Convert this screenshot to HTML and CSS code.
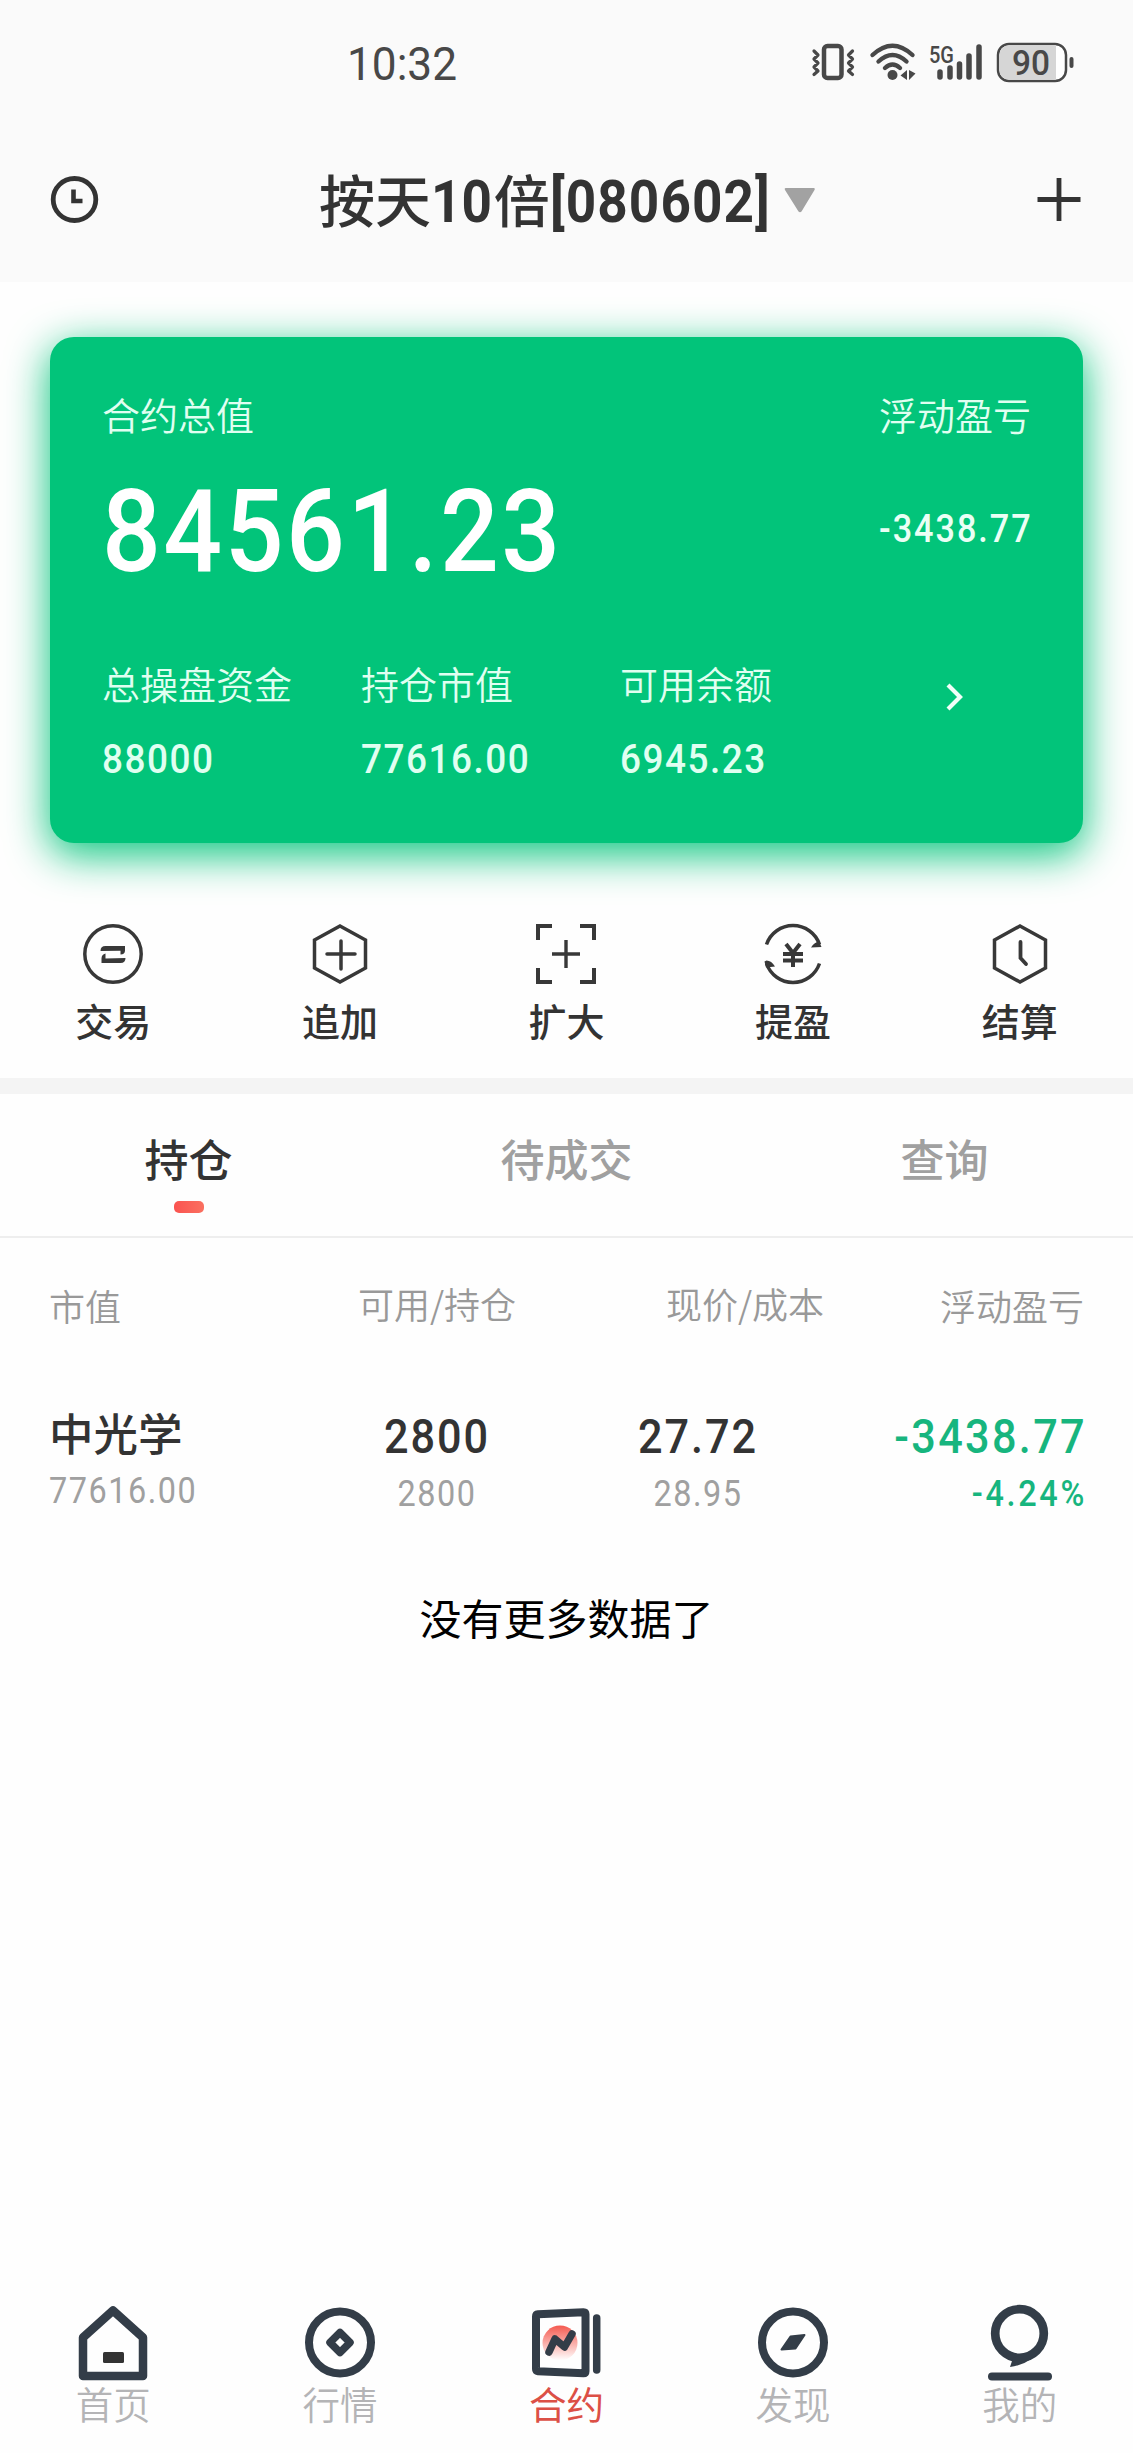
FILE: index.html
```html
<!DOCTYPE html>
<html lang="zh-CN">
<head>
<meta charset="utf-8">
<title>合约</title>
<link rel="stylesheet" href="styles.css">
</head>
<body>
<header class="top">
  <div class="status">
    <span class="time">10:32</span>
    <svg class="status-icons" width="280" height="60" viewBox="0 0 280 60" fill="none" stroke="#484848" stroke-linecap="round" stroke-linejoin="round">
      <rect x="14" y="16" width="17.500" height="32" rx="3.500" stroke-width="4.500"/>
      <path d="M4 21l4 4-4 4 4 4-4 4 4 4-4 3.500M42.500 21l-4 4 4 4-4 4 4 4-4 4 4 3.500" stroke-width="3.200"/>
      <path d="M62.500 25q20-18.500 40 0M68.500 31.500q14-13 28 0M75 38q7.500-7 15 0" stroke-width="4.400"/>
      <circle cx="82.500" cy="45" r="5" fill="#484848" stroke="none"/>
      <path d="M97 40v10l-6.500-4.500zM99 40v10l6.500-6.500z" fill="#484848" stroke="none"/>
      <path d="M130 42v5M140 38v9M149.500 34v13M159 26v21M169 17v30" stroke-width="5.500"/>
      <rect x="188" y="14" width="68" height="37" rx="11" stroke-width="2.500" fill="#fff"/>
      <path d="M199 15.300h47v34.400h-47a9.700 9.700 0 0 1-9.700-9.700v-15a9.700 9.700 0 0 1 9.700-9.700z" fill="#d6d6d6" stroke="none"/>
      <path d="M261.500 29v7" stroke-width="4"/>
      <text class="net" x="119" y="32.500" textLength="25" lengthAdjust="spacingAndGlyphs">5G</text>
      <text class="batt" x="202" y="44.500" textLength="38" lengthAdjust="spacingAndGlyphs">90</text>
    </svg>
  </div>
  <div class="titlebar">
    <svg width="50" height="50" viewBox="0 0 50 50" fill="none" stroke="#333"><ellipse cx="25.500" cy="24.500" rx="21.300" ry="21" stroke-width="4.800"/><path d="M24.500 14.500v11.500h9" stroke-width="4.600"/></svg>
    <h1 class="title"><span class="title-text">按天<b class="ten">10</b>倍<b class="code">[080602]</b></span><svg width="32" height="26" viewBox="0 0 32 26"><path d="M1.500 1h28.500q1.500.500.500 2l-13 21.500q-1.500 1.500-3 0l-13.500-21.500q-1-1.500.500-2z" fill="#a2a2a2"/></svg></h1>
    <svg width="46" height="46" viewBox="0 0 46 46" stroke="#333" stroke-width="4.800"><path d="M1.500 22.500h43M23 1v43"/></svg>
  </div>
</header>

<section class="card">
  <div class="card-head">
    <div><div class="label">合约总值</div><div class="total">84561.23</div></div>
    <div class="float"><div class="label">浮动盈亏</div><div class="pl">-3438.77</div></div>
  </div>
  <div class="card-foot">
    <div><div class="label">总操盘资金</div><div class="amount">88000</div></div>
    <div><div class="label">持仓市值</div><div class="amount">77616.00</div></div>
    <div><div class="label">可用余额</div><div class="amount">6945.23</div></div>
    <svg class="chevron" width="20" height="30" viewBox="0 0 20 30" fill="none" stroke="#f2fff9" stroke-width="4.200"><path d="M2 3l12 12-12 12"/></svg>
  </div>
</section>

<nav class="actions">
  <a><svg width="60" height="60" viewBox="0 0 60 60" fill="none" stroke="#383838" stroke-width="3.500"><circle cx="30" cy="30" r="28.200"/><path d="M17.500 27q0-5 5-5h19.500v4.500q0 4-4.500 4v-3.700zM42.500 34q0 5-5 5h-19v-4.500q0-4 4-5v5z" fill="#383838" stroke="none"/></svg><span>交易</span></a>
  <a><svg width="60" height="60" viewBox="0 0 60 60" fill="none" stroke="#383838" stroke-width="3.500"><path d="M30 2l25.500 14v28l-25.500 14-25.500-14v-28z"/><path d="M17 30h28M31 17v28" stroke-linecap="round"/></svg><span>追加</span></a>
  <a><svg width="60" height="60" viewBox="0 0 60 60" fill="none" stroke="#383838" stroke-width="4"><path d="M16 2h-14v14M44 2h14v14M16 58h-14v-14M44 58h14v-14"/><path d="M16 30h28M30 16v28" stroke-width="3.400"/></svg><span>扩大</span></a>
  <a><svg width="60" height="60" viewBox="0 0 60 60" fill="none" stroke="#383838" stroke-width="3.500"><path d="M3.500 20.500a28 28 0 0 1 53 0M3.500 39.500a28 28 0 0 0 53 0"/><path d="M58.500 23l-10.500.500q3-5 8-6zM1.500 37.500l2-1q5 0 8.500 6l-9 1z" fill="#383838" stroke="none"/><path d="M23 20l7 9 7-9M20 30h20M20 36.500h20M30 29v14" stroke-width="4"/></svg><span>提盈</span></a>
  <a><svg width="60" height="60" viewBox="0 0 60 60" fill="none" stroke="#383838" stroke-width="3.500"><path d="M30 2l25.500 14v28l-25.500 14-25.500-14v-28z"/><path d="M30.500 18v16l5.500 6" stroke-linecap="round" stroke-width="3.800"/></svg><span>结算</span></a>
</nav>

<main class="holdings">
  <div class="tabs"><span class="tab active">持仓</span><span class="tab">待成交</span><span class="tab">查询</span></div>
  <div class="grid columns"><span>市值</span><span class="mid">可用/持仓</span><span class="mid">现价/成本</span><span>浮动盈亏</span></div>
  <div class="grid stock">
    <div class="first"><div class="name">中光学</div><div class="sub">77616.00</div></div>
    <div><div class="num">2800</div><div class="sub">2800</div></div>
    <div><div class="num">27.72</div><div class="sub">28.95</div></div>
    <div class="down"><div class="num">-3438.77</div><div class="sub">-4.24%</div></div>
  </div>
  <p class="end">没有更多数据了</p>
</main>

<nav class="bottom">
  <a><svg width="76" height="80" viewBox="0 0 76 80" fill="none" stroke="#333d48" stroke-width="8.500" stroke-linejoin="round"><path d="M38 8.500l30 27v38.500h-60v-38.500z"/><rect x="28" y="50" width="21" height="11" rx="1.500" fill="#333" stroke="none"/></svg><span>首页</span></a>
  <a><svg width="76" height="80" viewBox="0 0 76 80" fill="none" stroke="#333d48" stroke-width="8"><circle cx="38" cy="40.500" r="31"/><path d="M38 30.500l10 10-10 10-10-10z" stroke-width="7.500" stroke-linejoin="round"/></svg><span>行情</span></a>
  <a class="on"><svg width="76" height="80" viewBox="0 0 76 80" fill="none" stroke="#333d48" stroke-width="8" stroke-linejoin="round" stroke-linecap="round"><defs><linearGradient id="sun" x1="0" y1="0" x2="0" y2="1"><stop offset="0" stop-color="#f45a50"/><stop offset="1" stop-color="#fff"/></linearGradient></defs><circle cx="32" cy="41" r="17.500" fill="url(#sun)" stroke="none"/><path d="M8 14.500q0-2 2-2.200l45.500-2q2 0 2 2v57q0 2-2 2l-45.500-2q-2-.200-2-2.200z"/><path d="M21 50l6-13 9.500 8 7.500-13" stroke-width="7.500"/><path d="M68.700 16v52" stroke-width="7.500"/></svg><span>合约</span></a>
  <a><svg width="76" height="80" viewBox="0 0 76 80" fill="none" stroke="#333d48" stroke-width="8"><circle cx="38" cy="40.500" r="31"/><path d="M26.500 47.500l9-13 14-1.500-9 13.500z" fill="#333d48" stroke-width="2" stroke-linejoin="round"/></svg><span>发现</span></a>
  <a><svg width="76" height="80" viewBox="0 0 76 80" fill="none" stroke="#333d48" stroke-width="8.700"><circle cx="37.500" cy="31.500" r="24.300"/><path d="M31 56l-3 9q22-3 31-19z" fill="#333d48" stroke="none"/><path d="M10 74.500h56" stroke-width="8" stroke-linecap="round"/></svg><span>我的</span></a>
</nav>
</body>
</html>
```
FILE: styles.css
```css
* { box-sizing: border-box; }
body { margin: 0; width: 1133px; height: 2453px; display: flex; flex-direction: column; background: #fefefe; color: #333; font-family: "Noto Sans CJK SC", sans-serif; font-size: 38px; }
svg { display: block; flex: none; overflow: visible; }
.top { height: 282px; background: #fafafa; }
.status { height: 122px; display: flex; justify-content: space-between; padding: 30px 43px 0 347px; }
.time { font: 400 47px/68px Roboto, sans-serif; color: #484848; transform: scaleX(.94); transform-origin: left; }
.net { font: 500 23px Roboto, sans-serif; fill: #484848; stroke: none; }
.batt { font: 500 35px Roboto, sans-serif; fill: #484848; stroke: none; }
.titlebar { height: 156px; display: flex; align-items: center; justify-content: space-between; padding: 0 51px 0 49px; }
.title { margin: 0; display: flex; align-items: center; gap: 15px; font-weight: 500; font-size: 56px; line-height: 80px; }
.title-text { display: block; width: 450px; white-space: nowrap; }
.title b { display: inline-block; font-family: Roboto, sans-serif; font-size: 59px; font-weight: 700; transform: scaleX(.9); transform-origin: left; }
.ten { margin-right: -5px; }
.code { letter-spacing: 1.200px; }

/* Figures are set slightly condensed and tracked out. */
.total, .pl, .amount, .num, .sub { transform: scaleX(.9); transform-origin: left; }

.card { height: 506px; margin: 55px 50px 0 50px; padding: 49px 52px 0 52px; border-radius: 24px; background: #02c47a; color: #e0fff1; box-shadow: 0 11px 42px 1px rgba(2, 196, 122, .97); }
.card-head { display: flex; justify-content: space-between; height: 269px; }
.label { font-size: 38px; line-height: 56px; font-weight: 350; white-space: nowrap; }
.total { font: 500 115px/120px Roboto, sans-serif; color: #fff; margin-top: 30px; letter-spacing: 2.800px; }
.float { text-align: right; }
.pl { font: 500 38px/50px Roboto, sans-serif; color: #eafff5; margin: 62px -2px 0 0; letter-spacing: 2.200px; transform-origin: right; }
.card-foot { display: grid; grid-template-columns: 259px 259px 326px 1fr; }
.amount { font: 500 41px/50px Roboto, sans-serif; margin-top: 23px; letter-spacing: 1.700px; }
.chevron { margin-top: 27px; }

.actions { display: grid; grid-template-columns: repeat(5, 1fr); height: 235px; padding-top: 81px; }
.actions a, .bottom a { display: flex; flex-direction: column; align-items: center; }
.actions span { font-size: 38px; line-height: 56px; font-weight: 500; margin-top: 8px; }

.holdings { border-top: 16px solid #f4f4f4; flex: 1; }
.tabs { height: 144px; border-bottom: 2px solid #eee; display: grid; grid-template-columns: 377px 1fr 377px; padding-top: 31px; }
.tab { font-size: 44px; line-height: 66px; font-weight: 500; color: #a0a0a0; text-align: center; }
.active { color: #333; }
.active::after { content: ""; display: block; width: 30px; height: 12px; margin: 10px auto 0; border-radius: 5px; background: linear-gradient(90deg, #fa5350, #fa7060); }
.grid { display: grid; grid-template-columns: 257px 262px 260px 256px; padding: 0 49px; }
.columns { padding-top: 41px; font-size: 36px; line-height: 52px; font-weight: 350; color: #999; grid-template-columns: 257px 262px 354px 1fr; }
.grid > :nth-child(2) { text-align: center; }
.grid > :nth-child(3) { text-align: center; }
.grid > :nth-child(4) { text-align: right; }
.mid { margin-top: -2px; }
.stock { padding-top: 76px; }
.name { font-size: 44.500px; font-weight: 500; line-height: 60px; margin-top: -5px; }
.num { font: 500 48px/60px Roboto, sans-serif; letter-spacing: 2.200px; transform-origin: center; }
.sub { font: 400 36px/50px Roboto, sans-serif; color: #a0a0a0; letter-spacing: 1.700px; margin-top: 2px; transform-origin: center; }
.first .sub { transform-origin: left; margin-top: 4px; }
.down .num, .down .sub { color: #17b57e; transform-origin: right; margin-right: -3px; }
.down .num { letter-spacing: 2.600px; }
.down .sub { font-weight: 500; letter-spacing: 3px; }
.end { margin: 67px 0 0; text-align: center; font-size: 42px; line-height: 62px; color: #000; }
.bottom { display: grid; grid-template-columns: repeat(5, 1fr); height: 151px; }
.bottom span { font-size: 37.500px; line-height: 50px; font-weight: 350; color: #b4b4b6; margin-top: -4px; }
.bottom .on span { color: #dc5046; font-weight: 400; }
```
